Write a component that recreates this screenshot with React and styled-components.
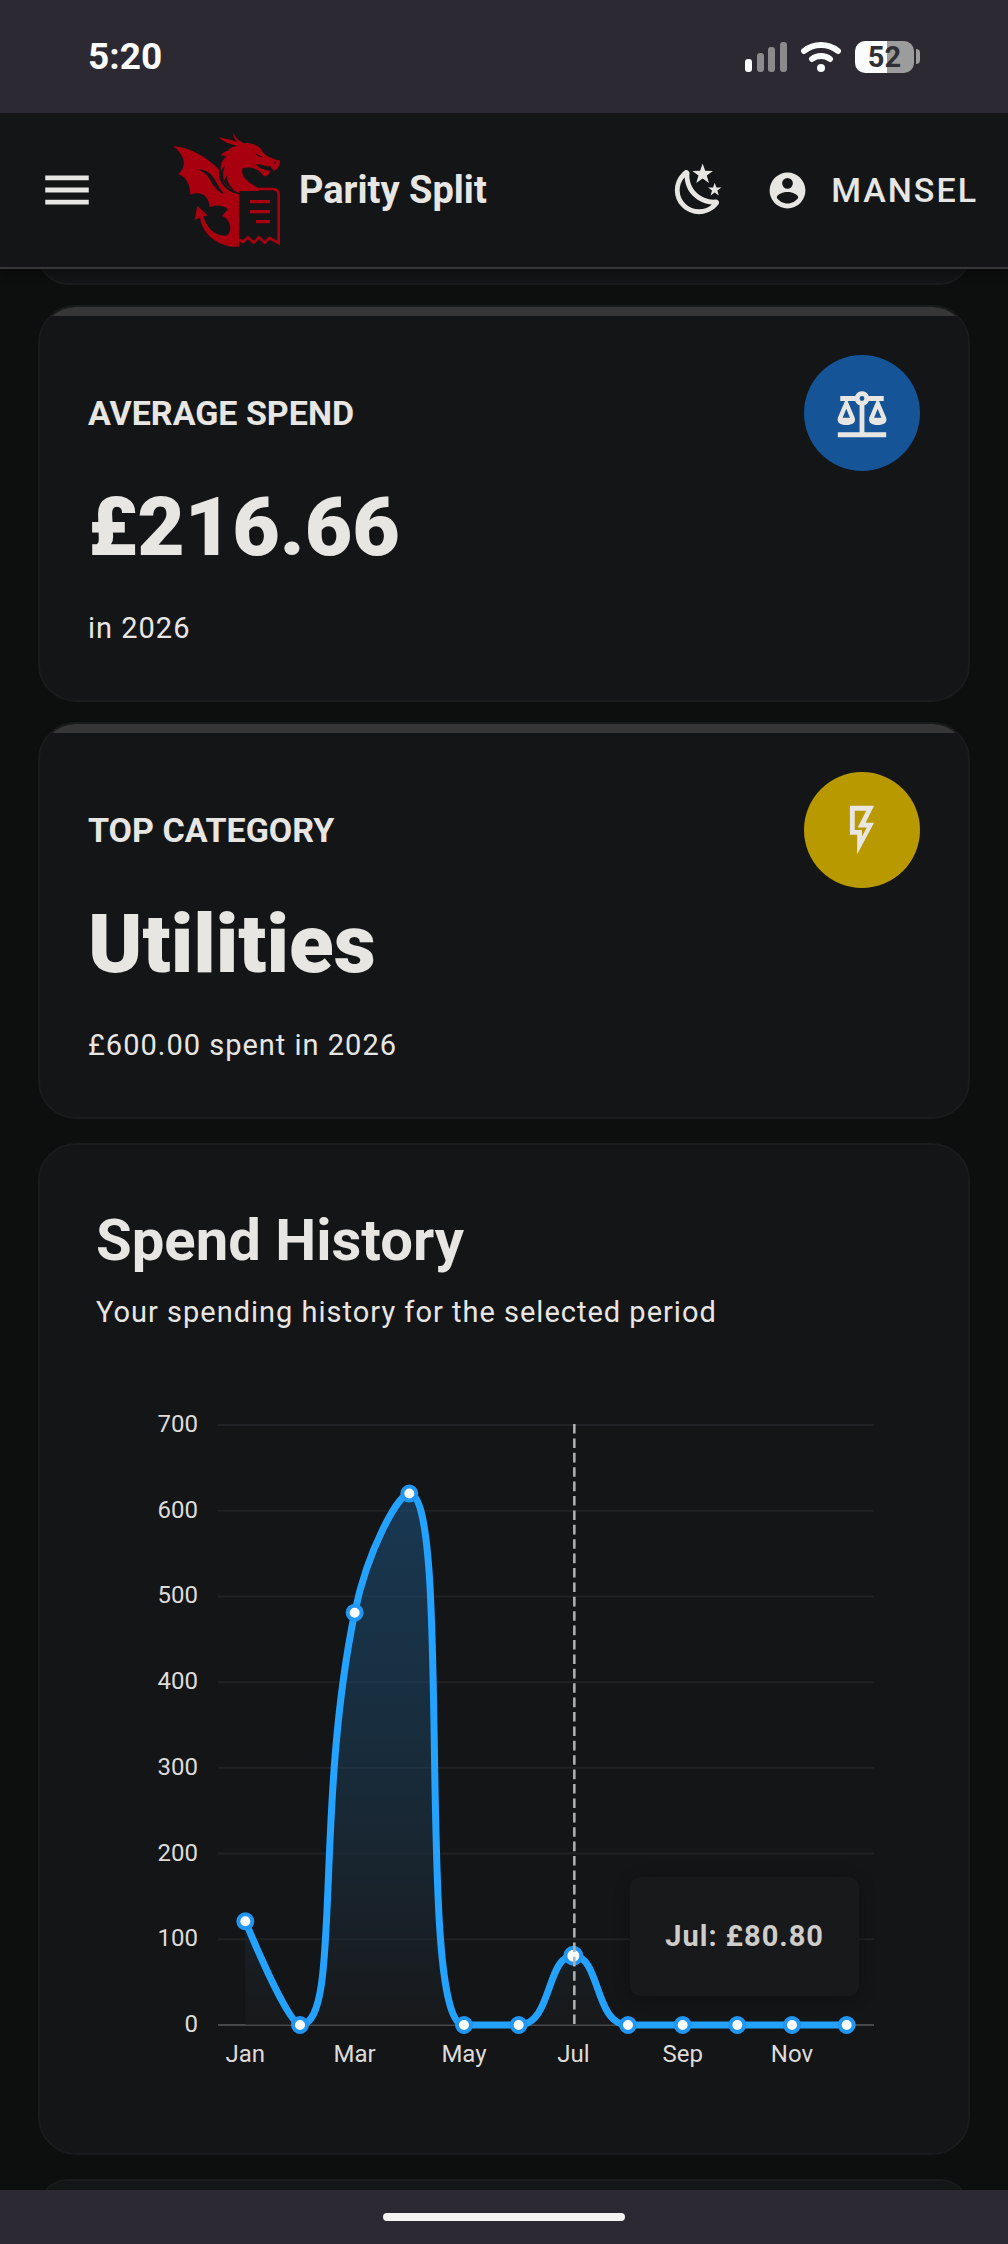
// App.jsx
import React, { useState } from "react";
import styled, { createGlobalStyle } from "styled-components";

const GlobalStyle = createGlobalStyle`
  * {
    box-sizing: border-box;
  }

  body {
    margin: 0;
    background: #0d0f0e;
    color: #e8e6e3;
    font-family: Roboto, "Liberation Sans", sans-serif;
  }
`;

const Shell = styled.div`
  height: 100vh;
  display: flex;
  flex-direction: column;
`;

const StatusBar = styled.div`
  flex: none;
  height: 113px;
  padding: 0 88px;
  background: #2c2933;
  display: flex;
  align-items: center;
  justify-content: space-between;
`;

const Clock = styled.time`
  font-size: 37px;
  font-weight: 700;
  color: #fafcfb;
`;

const StatusIcons = styled.div`
  display: flex;
  align-items: center;
  gap: 14px;
`;

const Battery = styled.div`
  display: flex;
  align-items: center;
  gap: 2px;
`;

const BatteryBody = styled.div`
  width: 59px;
  height: 32px;
  border-radius: 10px;
  background: linear-gradient(to right, #fafcfb 54%, #9c9c9c 54%);
  color: #2f3033;
  font-size: 29px;
  font-weight: 700;
  line-height: 32px;
  text-align: center;
`;

const BatteryCap = styled.div`
  width: 4px;
  height: 15px;
  border-radius: 0 4px 4px 0;
  background: #9c9c9c;
`;

const Header = styled.header`
  flex: none;
  height: 156px;
  padding: 0 30px 0 38px;
  background: #141517;
  border-bottom: 2px solid #37373a;
  box-shadow: 0 8px 8px rgba(0, 0, 0, 0.25);
  display: flex;
  align-items: center;
  z-index: 1;
`;

const IconButton = styled.button`
  display: flex;
  padding: 0;
  border: none;
  background: none;
  color: inherit;
  cursor: pointer;
`;

const Brand = styled.a`
  display: flex;
  align-items: center;
  gap: 18px;
  margin-left: 77px;
  margin-right: auto;
  color: inherit;
  font-size: 38px;
  font-weight: 700;
  text-decoration: none;
`;

const UserButton = styled(IconButton)`
  align-items: center;
  gap: 22px;
  margin-left: 38px;
  font-family: inherit;
  font-size: 34px;
  font-weight: 500;
  letter-spacing: 2px;
  text-transform: uppercase;
`;

const Content = styled.main`
  flex: 1;
  min-height: 0;
  padding: 0 38px;
  overflow-y: auto;
  scrollbar-width: none;
`;

const Card = styled.section`
  background: #141517;
  border: 2px solid #1a1b1c;
  border-radius: 38px;
  overflow: hidden;
`;

// card that has almost scrolled away under the header
const PastCard = styled(Card)`
  height: 60px;
  margin-top: -44px;
`;

const NextCard = styled(Card)`
  height: 60px;
  margin-top: 24px;
`;

const StatCard = styled(Card)`
  position: relative;
  margin-top: 20px;
  padding: 48px 48px 52px;

  &::before {
    content: "";
    position: absolute;
    top: 0;
    left: 0;
    right: 0;
    height: 9px;
    background: #353635;
  }
`;

const StatTop = styled.div`
  display: flex;
  align-items: center;
  justify-content: space-between;
`;

const StatLabel = styled.h2`
  margin: 0;
  font-size: 34px;
  font-weight: 700;
  line-height: 38px;
  text-transform: uppercase;
`;

const StatBadge = styled.div`
  width: 116px;
  height: 116px;
  border-radius: 50%;
  background: ${(props) => props.$color};
  display: flex;
  align-items: center;
  justify-content: center;
`;

const StatValue = styled.p`
  margin: 8px 0 32px;
  font-size: 82px;
  font-weight: 900;
  line-height: 97px;
`;

const Caption = styled.p`
  margin: 0;
  font-size: 29px;
  line-height: 40px;
  letter-spacing: 1px;
`;

const ChartCard = styled(Card)`
  margin-top: 24px;
  padding: 56px 56px 53px;
`;

const ChartTitle = styled.h2`
  margin: 0 0 12px;
  font-size: 58px;
  font-weight: 700;
  line-height: 79px;
`;

const ChartArea = styled.div`
  position: relative;
  margin-top: 68px;
`;

const ChartSvg = styled.svg`
  display: block;
  width: 100%;
  height: auto;
`;

const AxisText = styled.text`
  fill: #dedcd9;
  font-size: 24px;
`;

const Tooltip = styled.div`
  position: absolute;
  right: 53px;
  bottom: 104px;
  padding: 40px 35px;
  border-radius: 10px;
  background: #18191a;
  box-shadow: 0 2px 16px rgba(0, 0, 0, 0.25);
  color: #cfcdca;
  font-size: 29px;
  font-weight: 700;
  line-height: 39px;
  letter-spacing: 1px;
`;

const HomeBar = styled.div`
  flex: none;
  height: 54px;
  background: #2c2933;
  display: flex;
  align-items: center;
  justify-content: center;
`;

const HomeIndicator = styled.div`
  width: 242px;
  height: 8px;
  border-radius: 4px;
  background: #f5f4f2;
`;

const icons = {
  menu: "M3,6H21V8H3V6M3,11H21V13H3V11M3,16H21V18H3V16Z",
  night:
    "M17.75,4.09L15.22,6.03L16.13,9.09L13.5,7.28L10.87,9.09L11.78,6.03L9.25,4.09L12.44,4L13.5,1L14.56,4L17.75,4.09M21.25,11L19.61,12.25L20.2,14.23L18.5,13.06L16.8,14.23L17.39,12.25L15.75,11L17.81,10.95L18.5,9L19.19,10.95L21.25,11M18.97,15.95C19.8,15.87 20.69,17.05 20.16,17.8C19.84,18.25 19.5,18.67 19.08,19.07C15.17,23 8.84,23 4.94,19.07C1.03,15.17 1.03,8.83 4.94,4.93C5.34,4.53 5.76,4.17 6.21,3.85C6.96,3.32 8.14,4.21 8.06,5.04C7.79,7.9 8.75,10.87 10.95,13.06C13.14,15.26 16.1,16.22 18.97,15.95M17.33,17.97C14.5,17.81 11.7,16.64 9.53,14.5C7.36,12.31 6.2,9.5 6.04,6.68C3.23,9.82 3.34,14.64 6.35,17.66C9.37,20.67 14.19,20.78 17.33,17.97Z",
  account:
    "M12,19.2C9.5,19.2 7.29,17.92 6,16C6.03,14 10,12.9 12,12.9C14,12.9 17.97,14 18,16C16.71,17.92 14.5,19.2 12,19.2M12,5A3,3 0 0,1 15,8A3,3 0 0,1 12,11A3,3 0 0,1 9,8A3,3 0 0,1 12,5M12,2A10,10 0 0,0 2,12A10,10 0 0,0 12,22A10,10 0 0,0 22,12C22,6.47 17.5,2 12,2Z",
  scale:
    "M12,3C10.73,3 9.6,3.8 9.18,5H3V7H4.95L2,14C1.53,16 3,17 5.5,17C8,17 9.56,16 9,14L6.05,7H9.17C9.5,7.85 10.15,8.5 11,8.83V20H2V22H22V20H13V8.82C13.85,8.5 14.5,7.85 14.82,7H17.95L15,14C14.53,16 16,17 18.5,17C21,17 22.56,16 22,14L19.05,7H21V5H14.83C14.4,3.8 13.27,3 12,3M12,5A1,1 0 0,1 13,6A1,1 0 0,1 12,7A1,1 0 0,1 11,6A1,1 0 0,1 12,5M5.5,10.25L7,14H4L5.5,10.25M18.5,10.25L20,14H17L18.5,10.25Z",
  flash: "M7,2H17L13.5,9H17L10,22V14H7V2M9,4V12H12V14.66L14,11H10.24L13.76,4H9Z",
};

const Icon = ({ name, size = 58 }) => (
  <svg width={size} height={size} viewBox="0 0 24 24" aria-hidden="true">
    <path fill="currentColor" fillRule="evenodd" d={icons[name]} />
  </svg>
);

const SignalIcon = () => (
  <svg width="42" height="30" viewBox="0 0 42 30" aria-hidden="true">
    <rect x="0" y="17" width="7" height="13" rx="3" fill="#fafcfb" />
    <rect x="12" y="11" width="7" height="19" rx="3" fill="#8b8b8d" />
    <rect x="23" y="5" width="7" height="25" rx="3" fill="#8b8b8d" />
    <rect x="35" y="0" width="7" height="30" rx="3" fill="#8b8b8d" />
  </svg>
);

const WifiIcon = () => (
  <svg width="40" height="30" viewBox="0 0 40 30" aria-hidden="true">
    <g fill="none" stroke="#fafcfb" strokeWidth="6" strokeLinecap="round">
      <path d="M3 9C13 1 27 1 37 9" />
      <path d="M11 17C16 13 24 13 29 17" />
    </g>
    <circle cx="20" cy="26" r="4" fill="#fafcfb" />
  </svg>
);

const DragonLogo = () => (
  <svg width="108" height="116" viewBox="24 21 324 348" aria-hidden="true">
    <g fill="#a90010">
      {/* wing, body and tail */}
      <path d="M24 63C66 66 121 90 162 134C158 172 180 198 222 208V365C165 369 112 330 105 278L89 285L97 242L129 272L115 273C124 308 149 333 182 332C203 328 201 284 171 273L189 252C171 239 153 239 134 246C132 216 112 195 76 209C76 181 65 157 40 147C64 129 64 93 24 63Z" />
      {/* head and neck */}
      <path d="M205 22C210 39 223 49 239 55C264 54 287 62 294 82C304 95 327 104 344 106C347 120 338 133 326 137L316 124C301 126 290 116 272 118C282 129 298 137 316 137C315 146 307 153 299 154C292 152 290 142 278 135C264 127 246 126 233 130C227 153 243 165 260 177L284 192L281 198H222V204C184 190 163 167 167 128C168 112 174 103 184 95C177 91 170 91 166 93C173 82 185 77 199 76L188 75C196 68 207 64 218 62C195 59 176 50 160 37C177 39 196 44 216 51C208 42 204 33 205 22Z" />
    </g>
    <g fill="#141517">
      <path d="M94 133C131 130 146 157 158 179C165 193 173 202 181 208C155 202 144 180 136 166C125 147 112 137 94 133Z" />
      <path d="M165 127C160 159 180 184 218 204C191 184 184 166 187 151C181 157 178 163 178 169C172 153 174 137 180 124C173 128 170 134 168 140Z" />
      <path d="M269 82C277 90 285 94 293 94C286 99 275 94 269 82Z" />
      <path d="M326 112L334 110L331 116Z" />
      <path d="M222 198H325L337 210V350L313 335L298 349L282 335L265 349L248 335L222 350Z" />
    </g>
    <g fill="none" stroke="#a90010">
      <path d="M222 192H322Q341 192 341 210V354L313 339L299 353L282 337L266 353L249 337L234 351L222 344" strokeWidth="8" />
      <path d="M255 230H315M255 260H315M273 290H315" strokeWidth="10" />
    </g>
  </svg>
);

const spendHistory = [
  { month: "Jan", amount: 121 },
  { month: "Feb", amount: 0 },
  { month: "Mar", amount: 481 },
  { month: "Apr", amount: 620 },
  { month: "May", amount: 0 },
  { month: "Jun", amount: 0 },
  { month: "Jul", amount: 80.8 },
  { month: "Aug", amount: 0 },
  { month: "Sep", amount: 0 },
  { month: "Oct", amount: 0 },
  { month: "Nov", amount: 0 },
  { month: "Dec", amount: 0 },
];

const PLOT = { left: 122, right: 778, top: 25, bottom: 625, max: 700 };
const step = (PLOT.right - PLOT.left) / spendHistory.length;
const toY = (value) =>
  PLOT.bottom - (value / PLOT.max) * (PLOT.bottom - PLOT.top);
const clamp = (v, a, b) => Math.max(Math.min(v, Math.max(a, b)), Math.min(a, b));

// Smooth curve whose control points never leave the box of their segment
const smoothPath = (pts) => {
  let d = `M${pts[0].x} ${pts[0].y}`;
  let cp = pts[0];
  for (let i = 1; i < pts.length; i++) {
    const prev = pts[i - 1];
    const cur = pts[i];
    const next = pts[i + 1];
    let before = cur;
    let after = cur;
    if (next) {
      const lenPrev = Math.hypot(cur.x - prev.x, cur.y - prev.y);
      const lenNext = Math.hypot(next.x - cur.x, next.y - cur.y);
      const ratio = (0.5 * lenNext) / (lenNext + lenPrev);
      const ax = clamp(cur.x + (next.x - prev.x) * ratio, cur.x, next.x);
      const ay = clamp(cur.y + (next.y - prev.y) * ratio, cur.y, next.y);
      const k = lenPrev / lenNext;
      before = {
        x: clamp(cur.x - (ax - cur.x) * k, prev.x, cur.x),
        y: clamp(cur.y - (ay - cur.y) * k, prev.y, cur.y),
      };
      after = {
        x: cur.x + (cur.x - before.x) / k,
        y: cur.y + (cur.y - before.y) / k,
      };
    }
    d += `C${cp.x} ${cp.y} ${before.x} ${before.y} ${cur.x} ${cur.y}`;
    cp = after;
  }
  return d;
};

const SpendChart = ({ data, selected }) => {
  const points = data.map((item, i) => ({
    ...item,
    x: PLOT.left + step * (i + 0.5),
    y: toY(item.amount),
  }));
  const line = smoothPath(points);
  const area = `${line}L${points[points.length - 1].x} ${PLOT.bottom}L${points[0].x} ${PLOT.bottom}Z`;
  const active = points[selected];

  return (
    <ChartArea>
      <ChartSvg viewBox="0 0 816 700" role="img" aria-label="Spend history">
        <defs>
          <linearGradient id="areaFill" x1="0" y1="0" x2="0" y2="1">
            <stop offset="0" stopColor="#1b4a72" stopOpacity="0.65" />
            <stop offset="0.35" stopColor="#1b4a6c" stopOpacity="0.5" />
            <stop offset="1" stopColor="#1a1b1c" stopOpacity="0.6" />
          </linearGradient>
        </defs>

        {[0, 100, 200, 300, 400, 500, 600, 700].map((tick) => (
          <React.Fragment key={tick}>
            <line
              x1={PLOT.left}
              x2={PLOT.right}
              y1={toY(tick)}
              y2={toY(tick)}
              stroke={tick === 0 ? "#48494a" : "#202225"}
              strokeWidth="2"
            />
            <AxisText x="102" y={toY(tick) + 7} textAnchor="end">
              {tick}
            </AxisText>
          </React.Fragment>
        ))}

        <path d={area} fill="url(#areaFill)" />
        <path d={line} fill="none" stroke="#23a3ff" strokeWidth="7" />

        {points.map((p, i) => (
          <React.Fragment key={p.month}>
            <circle
              cx={p.x}
              cy={p.y}
              r={i === selected ? 8 : 7}
              fill="#fafcfb"
              stroke="#2196f3"
              strokeWidth="4"
            />
            {i % 2 === 0 && (
              <AxisText x={p.x} y="662" textAnchor="middle">
                {p.month}
              </AxisText>
            )}
          </React.Fragment>
        ))}

        <line
          x1={active.x + 1}
          x2={active.x + 1}
          y1={PLOT.top - 1}
          y2={PLOT.bottom}
          stroke="#b3b3b3"
          strokeWidth="2.5"
          strokeDasharray="9.6 4.8"
        />
      </ChartSvg>
      <Tooltip>
        {active.month}: £{active.amount.toFixed(2)}
      </Tooltip>
    </ChartArea>
  );
};

const stats = [
  {
    label: "Average Spend",
    value: "£216.66",
    note: "in 2026",
    icon: "scale",
    color: "#145497",
  },
  {
    label: "Top Category",
    value: "Utilities",
    note: "£600.00 spent in 2026",
    icon: "flash",
    color: "#b89900",
  },
];

const App = () => {
  const [selected] = useState(6);

  return (
    <Shell>
      <GlobalStyle />
      <StatusBar>
        <Clock>5:20</Clock>
        <StatusIcons>
          <SignalIcon />
          <WifiIcon />
          <Battery>
            <BatteryBody>52</BatteryBody>
            <BatteryCap />
          </Battery>
        </StatusIcons>
      </StatusBar>

      <Header>
        <IconButton aria-label="Open menu">
          <Icon name="menu" />
        </IconButton>
        <Brand href="#">
          <DragonLogo />
          Parity Split
        </Brand>
        <IconButton aria-label="Toggle dark mode">
          <Icon name="night" />
        </IconButton>
        <UserButton>
          <Icon name="account" size={43} />
          Mansel
        </UserButton>
      </Header>

      <Content>
        <PastCard />
        {stats.map((stat) => (
          <StatCard key={stat.label}>
            <StatTop>
              <StatLabel>{stat.label}</StatLabel>
              <StatBadge $color={stat.color}>
                <Icon name={stat.icon} />
              </StatBadge>
            </StatTop>
            <StatValue>{stat.value}</StatValue>
            <Caption>{stat.note}</Caption>
          </StatCard>
        ))}

        <ChartCard>
          <ChartTitle>Spend History</ChartTitle>
          <Caption>Your spending history for the selected period</Caption>
          <SpendChart data={spendHistory} selected={selected} />
        </ChartCard>
        <NextCard />
      </Content>

      <HomeBar>
        <HomeIndicator />
      </HomeBar>
    </Shell>
  );
};

export default App;
